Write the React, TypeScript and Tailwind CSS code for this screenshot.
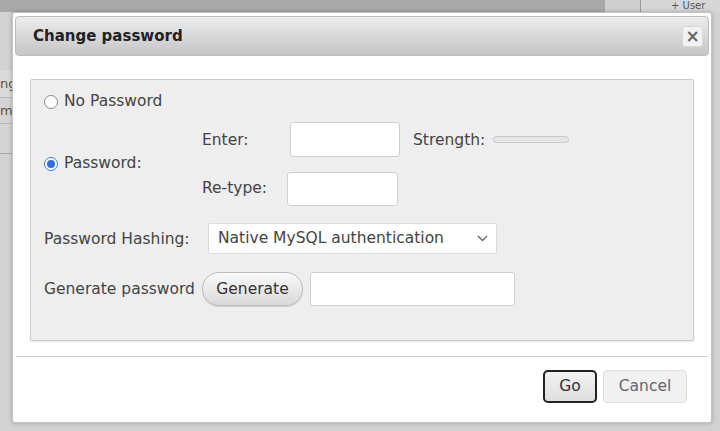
import React from "react";

function Radio({ checked }: { checked?: boolean }) {
  return (
    <span
      className={
        "inline-flex h-[14px] w-[14px] shrink-0 items-center justify-center rounded-full border bg-white " +
        (checked ? "border-[#3b7be0]" : "border-[#8a8a8a]")
      }
    >
      {checked && <span className="h-[8px] w-[8px] rounded-full bg-[#2f6fdc]" />}
    </span>
  );
}

function TextInput({ className }: { className: string }) {
  return <div className={"rounded-[3px] border border-[#cfcfcf] bg-white " + className} />;
}

export default function App() {
  return (
    <div
      className="relative h-[431px] w-[720px] overflow-hidden bg-[#d2d2d2] text-[#444]"
      style={{ fontFamily: '"DejaVu Sans", Verdana, sans-serif' }}
    >
      {/* page behind the overlay */}
      <div className="flex h-[12px]">
        <div className="w-[605px] bg-[#a9a9a9]" />
        <div className="w-[35px] bg-[#cfcfcf]" />
        <div className="w-px bg-[#9a9a9a]" />
        <div className="flex-1 bg-[#d6d6d6] pl-[30px] text-[10px] leading-[12px] text-[#555]">+ User</div>
      </div>
      <div className="flex flex-col pt-[58px] text-[13px] text-[#555]">
        <div className="h-[28px] w-[12px] overflow-hidden border-b border-[#b8b8b8] bg-[#dadada] leading-[28px]">ng</div>
        <div className="h-[26px] w-[12px] overflow-hidden border-b border-[#b8b8b8] bg-[#d4d4d4] leading-[26px]">m</div>
        <div className="h-[30px] w-[12px] border-b border-[#a8a8a8] bg-[#d4d4d4]" />
      </div>

      {/* dialog */}
      <div className="absolute left-[12px] top-[12px] flex h-[411px] w-[700px] flex-col rounded-[3px] border border-[#c4c4c4] bg-white px-[2px] pt-[3px] shadow-[0_0_4px_rgba(0,0,0,0.25)]">
        <div className="flex h-[40px] items-center justify-between rounded-[4px] border border-[#bdbdbd] bg-gradient-to-b from-[#ececec] to-[#c6c6c6] pl-[17px] pr-[5px]">
          <span className="text-[15px] font-bold text-[#222]">Change password</span>
          <span className="flex h-[21px] w-[21px] items-center justify-center rounded-[3px] border border-[#d8d8d8] bg-[#f2f2f2] text-[17px] font-bold leading-none text-[#666]">
            ×
          </span>
        </div>

        <div className="px-[15px] pt-[23px]">
          <div className="h-[262px] w-[664px] rounded-[2px] border border-[#cccccc] bg-[#eeeeee] pl-[13px] text-[15.5px] shadow-[0_1px_2px_rgba(0,0,0,0.1)]">
            <div className="flex h-[42px] items-center gap-[6px] pt-[1px]">
              <Radio />
              <span>No Password</span>
            </div>

            <div className="flex items-center">
              <div className="flex w-[158px] items-center gap-[6px]">
                <Radio checked />
                <span>Password:</span>
              </div>
              <div className="flex flex-col gap-[15px]">
                <div className="flex items-center">
                  <span className="w-[88px] pt-[2px]">Enter:</span>
                  <TextInput className="h-[35px] w-[110px]" />
                  <span className="ml-[13px] pt-[2px]">Strength:</span>
                  <div className="ml-[8px] h-[7px] w-[76px] rounded-full border border-[#c8c8c8] bg-[#e6e6e6]" />
                </div>
                <div className="flex items-center">
                  <span className="w-[85px]">Re-type:</span>
                  <TextInput className="h-[34px] w-[111px]" />
                </div>
              </div>
            </div>

            <div className="mt-[17px] flex items-center">
              <span className="w-[164px] pt-[2px]">Password Hashing:</span>
              <div className="flex h-[31px] w-[289px] items-center justify-between rounded-[2px] border border-[#dcdcdc] bg-white pl-[9px] pr-[8px]">
                <span className="pt-[1px]">Native MySQL authentication</span>
                <svg width="11" height="7" viewBox="0 0 11 7" fill="none" stroke="#666" strokeWidth="1.4">
                  <path d="M1 1l4.5 4.5L10 1" />
                </svg>
              </div>
            </div>

            <div className="mt-[18px] flex items-center">
              <span className="w-[158px] pt-[2px]">Generate password</span>
              <div className="flex h-[34px] w-[101px] items-center justify-center rounded-full border border-[#bcbcbc] bg-gradient-to-b from-[#fafafa] to-[#d9d9d9] pt-[2px] text-[#333] shadow-[0_1px_1px_rgba(0,0,0,0.15)]">
                Generate
              </div>
              <TextInput className="ml-[7px] h-[34px] w-[205px]" />
            </div>
          </div>
        </div>

        <div className="mx-[1px] mt-[15px] h-px bg-[#cfcfcf]" />

        <div className="flex justify-end gap-[6px] pr-[22px] pt-[13px] text-[15.5px]">
          <div className="flex h-[33px] w-[54px] items-center justify-center rounded-[5px] border-2 border-[#222] bg-gradient-to-b from-[#f2f2f2] to-[#dedede] pt-[1px] text-[#333]">
            Go
          </div>
          <div className="flex h-[33px] w-[84px] items-center justify-center rounded-[4px] border border-[#dddddd] bg-[#f1f1f1] pt-[1px] text-[#666]">
            Cancel
          </div>
        </div>
      </div>
    </div>
  );
}
